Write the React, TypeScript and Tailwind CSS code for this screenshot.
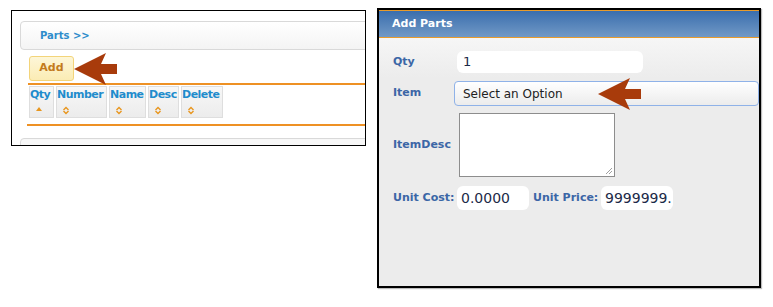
import React from "react";

const font = "font-['DejaVu_Sans','Liberation_Sans',sans-serif]";

const SortIcon = ({up}: {up?: boolean}) => (
    up ? (
        <svg width="8" height="6" viewBox="0 0 8 6" className="block">
            <polygon points="4,1 7,5 1,5" fill="#e8961e"/>
        </svg>
    ) : (
        <svg width="8" height="9" viewBox="0 0 8 9" className="block">
            <polyline points="1.5,4 4,1.5 6.5,4" fill="none" stroke="#e8961e" strokeWidth="1.4"/>
            <polyline points="1.5,5 4,7.5 6.5,5" fill="none" stroke="#e8961e" strokeWidth="1.4"/>
        </svg>
    )
);

const Arrow = ({className}: {className: string}) => (
    <svg width="44" height="32" viewBox="0 0 44 32" className={className}>
        <polygon points="0,16 32,0 27,11 43,11 43,21 27,21 32,32" fill="#a83b0b"/>
    </svg>
);

const columns = [
    {name: "Qty", w: "w-[25px]", up: true},
    {name: "Number", w: "w-[51px]"},
    {name: "Name", w: "w-[37px]"},
    {name: "Desc", w: "w-[31px]"},
    {name: "Delete", w: "w-[42px]"},
];

const PartsList = () => (
    <div className="relative w-[355px] h-[136px] border border-black bg-white overflow-hidden pt-[10px]">
        <div
            className="ml-[8px] w-[420px] h-[29px] rounded-[4px] border border-[#d9d9d9] bg-gradient-to-b from-[#ffffff] to-[#f4f4f4] flex items-center pl-[19px]">
            <span className="text-[10px] font-bold text-[#2e8ccb]">Parts &gt;&gt;</span>
        </div>
        <button
            className="mt-[6px] ml-[17px] w-[45px] h-[25px] rounded-[3px] border border-[#f3d47a] bg-gradient-to-b from-[#fdf6d8] to-[#fbecb4] text-[11px] font-bold text-[#c37a1c] flex items-center justify-center">
            Add
        </button>
        <Arrow className="absolute left-[62px] top-[42px] z-10"/>
        <div className="mt-[2px] ml-[16px] h-[2px] w-[400px] bg-[#ee9124]"/>
        <div className="mt-[1px] ml-[17px] flex gap-[2px]">
            {columns.map(c => (
                <div key={c.name}
                     className={`${c.w} h-[32px] border border-[#dedede] bg-gradient-to-b from-[#f7f7f7] to-[#ececec] pt-[1px] overflow-hidden`}>
                    <div className="text-[11px] font-bold leading-[14px] text-[#1f8ccc] tracking-[-0.5px] whitespace-nowrap">{c.name}</div>
                    <div className="mt-[4px] ml-[5px]"><SortIcon up={c.up}/></div>
                </div>
            ))}
        </div>
        <div className="mt-[6px] ml-[15px] h-[2px] w-[400px] bg-[#ee9124]"/>
        <div className="mt-[12px] ml-[8px] w-[420px] h-[20px] rounded-[4px] border border-[#d9d9d9] bg-[#f7f7f7]"/>
    </div>
);

const AddParts = () => (
    <div className="relative w-[384px] h-[280px] border-2 border-black bg-[#ececec] overflow-hidden shadow-[1px_1px_1px_#bbb]">
        <div
            className="h-[28px] border-t border-b border-[#e89b2c] bg-gradient-to-b from-[#3a6ead] to-[#7199c6] flex items-center pl-[13px]">
            <span className="text-[11px] font-bold text-white">Add Parts</span>
        </div>
        <div className="bg-gradient-to-b from-[#f6f6f6] to-[#ececec] h-[40px] absolute top-[28px] left-0 right-0"/>
        <div className="relative pl-[14px] pt-[13px]">
            <div className="flex items-center h-[22px]">
                <span className="w-[64px] text-[11px] font-bold text-[#3b66a6]">Qty</span>
                <div className="w-[186px] h-[22px] rounded-[6px] bg-white flex items-center pl-[6px] text-[13px] text-[#1c2a48]">1</div>
            </div>
            <div className="flex items-center h-[25px] mt-[8px]">
                <span className="w-[64px] text-[11px] font-bold text-[#3b66a6]">Item</span>
                <div
                    className="w-[320px] h-[25px] rounded-[4px] border border-[#8fb2e8] bg-gradient-to-b from-[#ffffff] to-[#ececec] flex items-center pl-[8px] text-[12px] text-[#222]">
                    Select an Option
                </div>
            </div>
            <div className="flex items-center mt-[7px]">
                <span className="w-[66px] text-[11px] font-bold text-[#3b66a6]">ItemDesc</span>
                <div className="relative w-[156px] h-[64px] border border-[#8d8d8d] bg-white">
                    <svg width="8" height="8" viewBox="0 0 8 8" className="absolute right-[1px] bottom-[1px]">
                        <line x1="7" y1="1" x2="1" y2="7" stroke="#888" strokeWidth="0.8"/>
                        <line x1="7" y1="4" x2="4" y2="7" stroke="#888" strokeWidth="0.8"/>
                    </svg>
                </div>
            </div>
            <div className="flex items-center mt-[9px] h-[24px]">
                <span className="w-[64px] text-[11px] font-bold text-[#3b66a6]">Unit Cost:</span>
                <div className="w-[72px] h-[24px] rounded-[6px] bg-white flex items-center pl-[4px] text-[14px] text-[#1c2a48]">0.0000</div>
                <span className="ml-[4px] w-[68px] text-[11px] font-bold text-[#3b66a6]">Unit Price:</span>
                <div className="w-[72px] h-[24px] rounded-[6px] bg-white flex items-center pl-[4px] text-[14px] text-[#1c2a48] overflow-hidden whitespace-nowrap">9999999.</div>
            </div>
            <Arrow className="absolute left-[219px] top-[40px] z-10"/>
        </div>
    </div>
);

export default function App() {
    return (
        <div className={`${font} w-[773px] h-[307px] bg-white flex items-start`}>
            <div className="ml-[11px] mt-[10px]">
                <PartsList/>
            </div>
            <div className="ml-[11px] mt-[8px]">
                <AddParts/>
            </div>
        </div>
    );
}
